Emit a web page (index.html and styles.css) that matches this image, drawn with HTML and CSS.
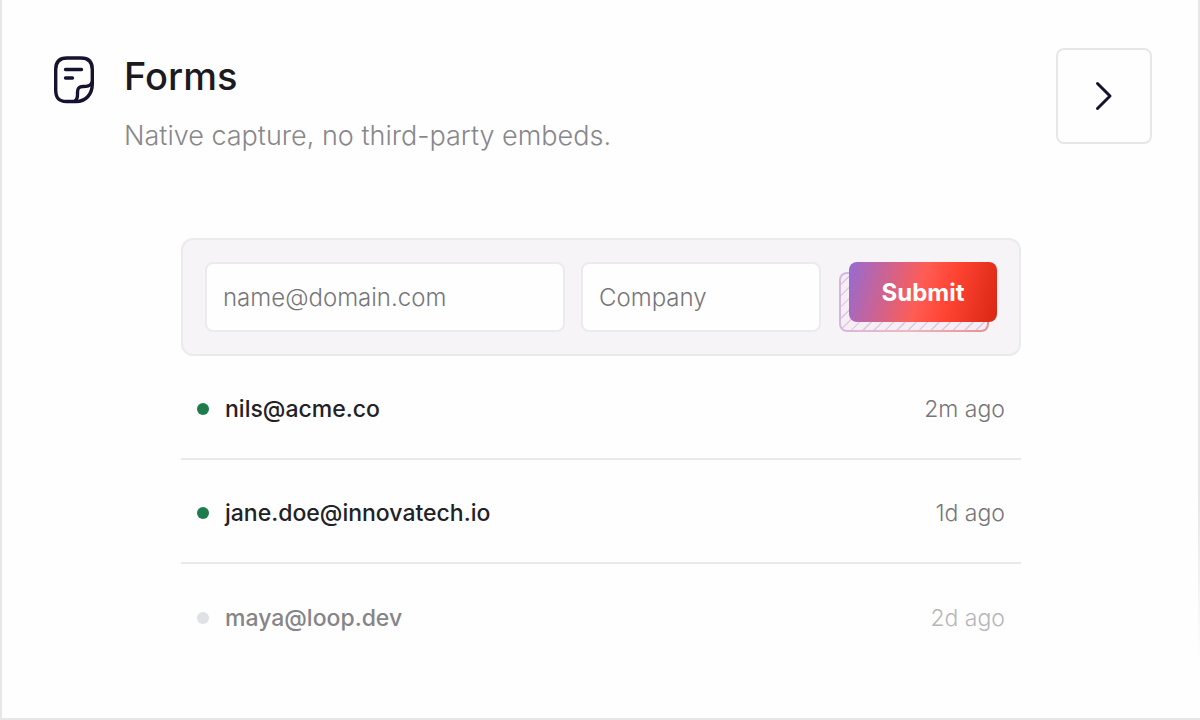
FILE: index.html
```html
<!DOCTYPE html>
<html lang="en">
<head>
    <meta charset="UTF-8">
    <meta name="viewport" content="width=device-width, initial-scale=1.0">
    <title>Forms</title>
    <link rel="stylesheet" href="styles.css">
</head>
<body>
    <section class="card">
        <!-- Card Header -->
        <header class="card-header">
            <svg class="card-icon" viewBox="0 0 48 64" fill="none" stroke="#15132f" stroke-width="3.400" stroke-linecap="round" stroke-linejoin="round" aria-hidden="true">
                <path d="M24 53.500H16.500C8.500 53.500 5.700 49.500 5.700 42V21.500C5.700 14 9 10 17 10H31C39 10 42.300 14 42.300 21.500V36C42.300 46 36 53.500 26 53.500H22"/>
                <path d="M25 53C28 51 27.500 47.500 27.500 44.500C27.500 40 29 38.500 33 38.500C36.500 38.500 40.500 38.500 42 34.500"/>
                <path d="M15.500 21.500H31.500M15.500 30H22.500"/>
            </svg>
            <div class="card-heading">
                <h2>Forms</h2>
                <p>Native capture, no third-party embeds.</p>
            </div>
            <button class="open-button" type="button" aria-label="Open forms">
                <svg width="32" height="32" viewBox="0 0 32 32" fill="none" stroke="#15132f" stroke-width="3" stroke-linecap="round" stroke-linejoin="round" aria-hidden="true">
                    <path d="M9.500 3.500L22 16L9.500 28.500"/>
                </svg>
            </button>
        </header>

        <!-- Form Demo -->
        <div class="demo">
            <form class="capture-form">
                <input type="email" placeholder="name@domain.com" aria-label="Email">
                <input type="text" placeholder="Company" aria-label="Company">
                <div class="submit-wrap">
                    <button class="submit-button" type="button">Submit</button>
                </div>
            </form>

            <ul class="entries">
                <li class="entry">
                    <span class="dot"></span>
                    <span class="email">nils@acme.co</span>
                    <time>2m ago</time>
                </li>
                <li class="entry">
                    <span class="dot"></span>
                    <span class="email">jane.doe@innovatech.io</span>
                    <time>1d ago</time>
                </li>
                <li class="entry faded">
                    <span class="dot"></span>
                    <span class="email">maya@loop.dev</span>
                    <time>2d ago</time>
                </li>
            </ul>
        </div>
    </section>
</body>
</html>
```
FILE: styles.css
```css
/* Global Styles */
*,
*::before,
*::after {
    margin: 0;
    padding: 0;
    box-sizing: border-box;
}

body {
    font-family: Inter, "Liberation Sans", sans-serif;
    background-color: #fefefe;
    color: #222126;
}

.card {
    position: relative;
    min-height: 100vh;
    padding: 48px 46px 48px 48px;
    border: 2px solid #e7e6e8;
    border-top: none;
}

/* Right edge fades out towards the bottom */
.card::after {
    content: "";
    position: absolute;
    right: -2px;
    bottom: 0;
    width: 2px;
    height: 220px;
    background: linear-gradient(#e7e6e8, #fefefe 75%);
}

/* Card Header */
.card-header {
    display: flex;
    align-items: flex-start;
}

.card-icon {
    flex: none;
    width: 48px;
    height: 64px;
    margin-right: 26px;
}

.card-heading {
    flex: 1;
}

.card-heading h2 {
    font-size: 38px;
    font-weight: 500;
    line-height: 56px;
    color: #1b1a1e;
}

.card-heading p {
    margin-top: 12px;
    font-size: 27px;
    font-weight: 300;
    line-height: 40px;
    color: #88878b;
}

.open-button {
    display: flex;
    align-items: center;
    justify-content: center;
    width: 96px;
    height: 96px;
    background-color: #fefefe;
    border: 2px solid #e7e6e8;
    border-radius: 8px;
    cursor: pointer;
}

/* Form Demo */
.demo {
    max-width: 840px;
    margin: 82px auto 0;
}

.capture-form {
    display: grid;
    grid-template-columns: 3fr 2fr 160px;
    gap: 16px;
    padding: 22px;
    background-color: #f6f4f7;
    border: 2px solid #ebeaec;
    border-radius: 12px;
}

.capture-form input {
    min-width: 0;
    height: 70px;
    padding: 0 16px;
    font-family: inherit;
    font-size: 24px;
    font-weight: 300;
    color: #222126;
    background-color: #fefefe;
    border: 2px solid #ebeaec;
    border-radius: 8px;
}

.capture-form input::placeholder {
    color: #77767a;
}

.submit-wrap {
    position: relative;
    z-index: 0;
    padding-left: 12px;
}

/* Hatched plate behind the button */
.submit-wrap::before {
    content: "";
    position: absolute;
    z-index: -1;
    left: 2px;
    right: 8px;
    top: 10px;
    height: 60px;
    border: 2px solid transparent;
    border-radius: 8px;
    background:
        repeating-linear-gradient(135deg, #f6edf5 0, #f6edf5 6px, #dccde4 7px, #dccde4 8px) padding-box,
        linear-gradient(100deg, #d2b8e5, #eeb8c0 50%, #e88f8d) border-box;
}

.submit-button {
    width: 100%;
    height: 60px;
    font-family: inherit;
    font-size: 24px;
    font-weight: 700;
    color: #fff;
    background: linear-gradient(105deg, #956bd3 0%, #ff5c54 48%, #ff4534 66%, #d92613 100%);
    border: none;
    border-radius: 8px;
    cursor: pointer;
}

/* Entries */
.entries {
    list-style: none;
}

.entry {
    display: flex;
    align-items: center;
    height: 104px;
    padding: 4px 16px 0;
    border-bottom: 2px solid #e9e8eb;
    font-size: 23px;
    line-height: 32px;
}

.entry:last-child {
    border-bottom: none;
}

.dot {
    width: 12px;
    height: 12px;
    margin-right: 16px;
    background-color: #1d7c4d;
    border-radius: 50%;
}

.email {
    flex: 1;
    font-weight: 500;
}

.entry time {
    font-weight: 300;
    color: #77767a;
}

.faded .dot {
    background-color: #e0e1e5;
}

.faded .email {
    color: #858488;
}

.faded time {
    color: #b7b6b9;
}
```
